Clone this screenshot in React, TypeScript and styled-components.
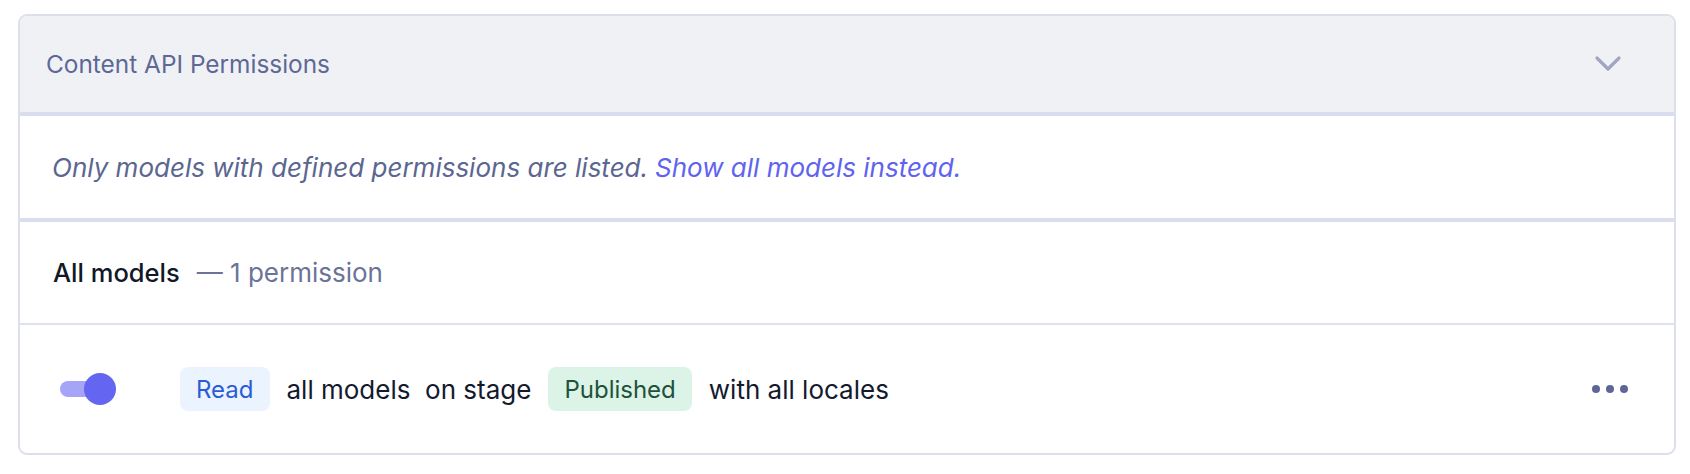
import React, { useState } from 'react';
import styled, { createGlobalStyle } from 'styled-components';

const GlobalStyle = createGlobalStyle`
  html, body {
    margin: 0;
    padding: 0;
    background: #ffffff;
    font-family: Inter, "Noto Sans", "Liberation Sans", sans-serif;
  }
  * { box-sizing: border-box; }
`;

const Page = styled.div`
  padding: 14px 14px 0 18px;
`;

const Card = styled.section`
  border: 2px solid #dcdfec;
  border-radius: 9px;
  overflow: hidden;
  background: #fff;
`;

const Header = styled.div`
  height: 100px;
  display: flex;
  align-items: center;
  justify-content: space-between;
  padding: 0 52px 0 26px;
  background: #f0f1f5;
  border-bottom: 4px solid #dadded;
`;

const Title = styled.h2`
  margin: 0;
  font-size: 24.4px;
  font-weight: 400;
  color: #5e6895;
`;

const Notice = styled.div`
  height: 106px;
  display: flex;
  align-items: center;
  padding: 0 32px;
  border-bottom: 4px solid #dadded;
  font-size: 26px;
  font-style: italic;
  color: #5b6691;
`;

const Link = styled.a`
  color: #5f63f0;
  text-decoration: none;
  margin-left: 7px;
  cursor: pointer;
`;

const GroupRow = styled.div`
  height: 103px;
  display: flex;
  align-items: center;
  padding: 0 33px;
  border-bottom: 2px solid #dfe1ee;
  font-size: 26px;
`;

const GroupName = styled.span`
  color: #111827;
  font-size: 25.5px;
  font-weight: 500;
`;

const GroupCount = styled.span`
  color: #6b7399;
  margin-left: 17px;
`;

const PermissionRow = styled.div`
  height: 128px;
  display: flex;
  align-items: center;
  padding: 0 46px 0 40px;
  font-size: 26px;
  color: #141a2e;
`;

const Toggle = styled.button<{ $on: boolean }>`
  position: relative;
  width: 58px;
  height: 32px;
  padding: 0;
  border: none;
  background: transparent;
  cursor: pointer;
  margin-right: 62px;

  &::before {
    content: '';
    position: absolute;
    left: 0;
    top: 8px;
    width: 48px;
    height: 16px;
    border-radius: 8px;
    background: ${(p) => (p.$on ? '#a5a4f6' : '#d5d8e6')};
  }

  &::after {
    content: '';
    position: absolute;
    top: 0;
    left: ${(p) => (p.$on ? '24px' : '0')};
    width: 32px;
    height: 32px;
    border-radius: 50%;
    background: ${(p) => (p.$on ? '#6466f1' : '#ffffff')};
  }
`;

const Badge = styled.span<{ $tone: 'blue' | 'green' }>`
  display: inline-flex;
  align-items: center;
  height: 44px;
  padding: 0 16px;
  border-radius: 8px;
  font-size: 24px;
  background: ${(p) => (p.$tone === 'blue' ? '#ebf3fe' : '#dcf3e8')};
  color: ${(p) => (p.$tone === 'blue' ? '#2b5cd6' : '#1f5239')};
`;

const Phrase = styled.span`
  margin: 0 17px;
  white-space: pre;
`;

const Spacer = styled.div`
  flex: 1;
`;

const IconButton = styled.button`
  display: flex;
  align-items: center;
  justify-content: center;
  border: none;
  background: transparent;
  padding: 0;
  cursor: pointer;
  color: #5d6694;
`;

const App = () => {
  const [enabled, setEnabled] = useState(true);

  return (
    <Page>
      <GlobalStyle />
      <Card>
        <Header>
          <Title>Content API Permissions</Title>
          <IconButton aria-label="Collapse">
            <svg width="28" height="18" viewBox="0 0 28 18" fill="none">
              <path d="M3 3l11 11L25 3" stroke="#a0a5c1" strokeWidth="3.2" strokeLinecap="round" strokeLinejoin="round" />
            </svg>
          </IconButton>
        </Header>
        <Notice>
          Only models with defined permissions are listed.
          <Link>Show all models instead.</Link>
        </Notice>
        <GroupRow>
          <GroupName>All models</GroupName>
          <GroupCount>— 1 permission</GroupCount>
        </GroupRow>
        <PermissionRow>
          <Toggle $on={enabled} onClick={() => setEnabled(!enabled)} aria-label="Toggle permission" />
          <Badge $tone="blue">Read</Badge>
          <Phrase>all models  on stage</Phrase>
          <Badge $tone="green">Published</Badge>
          <Phrase>with all locales</Phrase>
          <Spacer />
          <IconButton aria-label="More">
            <svg width="36" height="8" viewBox="0 0 36 8">
              <circle cx="4" cy="4" r="4" fill="currentColor" />
              <circle cx="18" cy="4" r="4" fill="currentColor" />
              <circle cx="32" cy="4" r="4" fill="currentColor" />
            </svg>
          </IconButton>
        </PermissionRow>
      </Card>
    </Page>
  );
};

export default App;
